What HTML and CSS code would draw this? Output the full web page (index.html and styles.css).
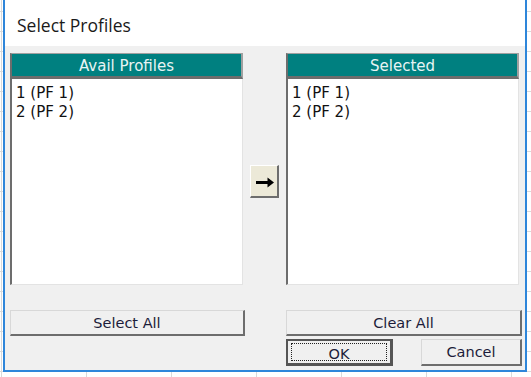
FILE: index.html
```html
<!DOCTYPE html>
<html lang="en">
<head>
    <meta charset="UTF-8">
    <title>Select Profiles</title>
    <link rel="stylesheet" href="styles.css">
</head>
<body>
    <div class="dialog">
        <div class="title">Select Profiles</div>

        <div class="content">
            <div class="listbox">
                <div class="list-head">Avail Profiles</div>
                <ul class="list-items">
                    <li>1 (PF 1)</li>
                    <li>2 (PF 2)</li>
                </ul>
            </div>

            <div class="middle">
                <button class="arrow-btn" title="Add">
                    <svg width="20" height="11" viewBox="0 0 20 11">
                        <path d="M1 4h11.5V0.5L19 5.5l-6.5 5V7H1z" fill="#000"/>
                    </svg>
                </button>
            </div>

            <div class="listbox">
                <div class="list-head">Selected</div>
                <ul class="list-items">
                    <li>1 (PF 1)</li>
                    <li>2 (PF 2)</li>
                </ul>
            </div>

            <button class="btn wide left-btn">Select All</button>
            <div></div>
            <button class="btn wide">Clear All</button>

            <div></div>
            <div></div>
            <div class="actions">
                <button class="btn default ok"><span class="focus">OK</span></button>
                <button class="btn cancel">Cancel</button>
            </div>
        </div>
    </div>
</body>
</html>
```

FILE: styles.css
```css
body {
    margin: 0;
    height: 377px;
    overflow: hidden;
    font-family: 'DejaVu Sans', sans-serif;
    background-color: #ffffff;
    background-image:
        linear-gradient(#dadada 1px, transparent 1px),
        linear-gradient(90deg, #dadada 1px, transparent 1px);
    background-size: 85px 20px;
    background-position: 0 11px, 1px 0;
}

.dialog {
    margin-left: 3px;
    width: 520px;
    height: 370px;
    border: 2px solid #2e86da;
    border-top: none;
    background: #f0f0f0;
    display: flex;
    flex-direction: column;
}

.title {
    height: 46px;
    background: #ffffff;
    font-family: 'Open Sans', sans-serif;
    font-size: 17.5px;
    color: #1a1a1a;
    padding: 2px 0 0 12px;
    line-height: 46px;
    box-sizing: border-box;
}

.content {
    display: grid;
    grid-template-columns: 235px 41px 236px;
    grid-template-rows: 232px auto auto;
    padding: 7px 0 0 5px;
}

.listbox {
    width: 233px;
    display: flex;
    flex-direction: column;
}

.list-head {
    height: 22px;
    background: #008080;
    border-top: 1px solid #a0a0a0;
    border-left: 2px solid #6d6d6d;
    border-right: 2px solid #a0a0a0;
    border-bottom: 3px solid #6d6d6d;
    color: #e8f4f4;
    font-size: 15px;
    line-height: 24px;
    text-align: center;
}

.list-items {
    flex: 1;
    margin: 0;
    padding: 5px 0 0 4px;
    list-style: none;
    background: #ffffff;
    border-left: 2px solid #6d6d6d;
    border-right: 1px solid #e3e3e3;
    border-bottom: 1px solid #e3e3e3;
    font-size: 15px;
    line-height: 19px;
    color: #111;
}

.middle {
    padding: 112px 0 0 5px;
}

.arrow-btn {
    width: 29px;
    height: 33px;
    padding: 3px 0 0 2px;
    background: #ece9d8;
    border: 1px solid #ffffff;
    border-right: 2px solid #6d6d6d;
    border-bottom: 2px solid #6d6d6d;
    display: flex;
    align-items: center;
    justify-content: center;
}

.btn {
    height: 26px;
    padding: 0;
    background: #f0f0f0;
    border-top: 1px solid #d8d8d8;
    border-left: 1px solid #d8d8d8;
    border-right: 2px solid #6d6d6d;
    border-bottom: 2px solid #6d6d6d;
    font-family: 'DejaVu Sans', sans-serif;
    font-size: 14.5px;
    color: #1c1c3a;
}

.wide {
    margin-top: 25px;
    width: 236px;
}

.left-btn {
    width: 235px;
}

.actions {
    display: flex;
    justify-content: space-between;
    margin-top: 3px;
}

.ok {
    width: 107px;
    height: 27px;
    border: 2px solid #555555;
    border-right-width: 3px;
    border-bottom-width: 3px;
    padding: 2px 3px;
}

.focus {
    display: block;
    height: 100%;
    border: 1px dotted #222;
    box-sizing: border-box;
    line-height: 20px;
}

.cancel {
    width: 101px;
    height: 27px;
}
```
